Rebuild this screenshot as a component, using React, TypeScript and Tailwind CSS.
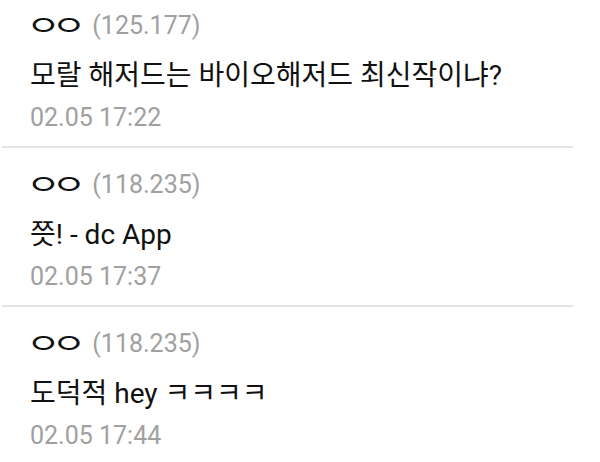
const comments = [
  { name: "ㅇㅇ", ip: "(125.177)", text: "모랄 해저드는 바이오해저드 최신작이냐?", date: "02.05 17:22" },
  { name: "ㅇㅇ", ip: "(118.235)", text: "쯧! - dc App", date: "02.05 17:37" },
  { name: "ㅇㅇ", ip: "(118.235)", text: "도덕적 hey ㅋㅋㅋㅋ", date: "02.05 17:44" },
];

export default function App() {
  return (
    <div
      className="h-[462px] w-[600px] overflow-hidden bg-white"
      style={{ fontFamily: 'Roboto, "Noto Sans CJK KR", sans-serif' }}
    >
      <ul className="mt-[-11px] ml-[2px] w-[571px]">
        {comments.map((c, i) => (
          <li key={i} className="border-b-2 border-[#e4e4e4] px-[28px] pt-[17px] pb-[8px]">
            <div className="flex items-center leading-[40px]">
              {/* the app's jamo glyphs are wide ovals */}
              <span className="-ml-[4px] inline-block origin-left scale-x-[1.4] text-[27px] tracking-[-6.7px] text-[#111]">
                {c.name}
              </span>
              <span className="ml-[30px] text-[25px] text-[#a0a0a0]">{c.ip}</span>
            </div>
            <p className="mt-[10px] text-[28px] leading-[40px] text-[#111]">{c.text}</p>
            <p className="mt-[2px] text-[25px] leading-[40px] text-[#a0a0a0]">{c.date}</p>
          </li>
        ))}
      </ul>
    </div>
  );
}
